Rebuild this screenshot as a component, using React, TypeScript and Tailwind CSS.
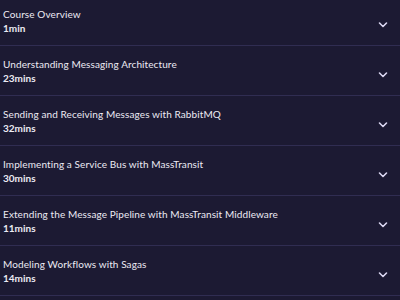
import React from 'react';

interface Module {
    title: string;
    duration: string;
}

const modules: Module[] = [
    { title: 'Course Overview', duration: '1min' },
    { title: 'Understanding Messaging Architecture', duration: '23mins' },
    { title: 'Sending and Receiving Messages with RabbitMQ', duration: '32mins' },
    { title: 'Implementing a Service Bus with MassTransit', duration: '30mins' },
    { title: 'Extending the Message Pipeline with MassTransit Middleware', duration: '11mins' },
    { title: 'Modeling Workflows with Sagas', duration: '14mins' },
];

const Chevron = () => (
    <svg width="10" height="8" viewBox="0 0 10 8" fill="none" className="mt-[7px]">
        <path d="M1.5 2 L5 5.5 L8.5 2" stroke="#dcd8f2" strokeWidth="1.6" strokeLinecap="round" strokeLinejoin="round" />
    </svg>
);

const App: React.FC = () => {
    return (
        <div className="w-[400px] h-[300px] overflow-hidden bg-[#1c1a33] font-['Lato','Liberation_Sans',sans-serif] text-[#ecebf3]">
            <div className="-mt-[4px]">
                {modules.map((m) => (
                    <div
                        key={m.title}
                        className="flex items-center justify-between pl-[3px] pr-[12px] pt-[11px] pb-[10px] border-b border-[#302d52]"
                    >
                        <div className="flex flex-col">
                            <span className="text-[10px] leading-[14px] tracking-[0.1px]">{m.title}</span>
                            <span className="text-[10px] leading-[14px] font-bold">{m.duration}</span>
                        </div>
                        <Chevron />
                    </div>
                ))}
            </div>
        </div>
    );
};

export default App;
